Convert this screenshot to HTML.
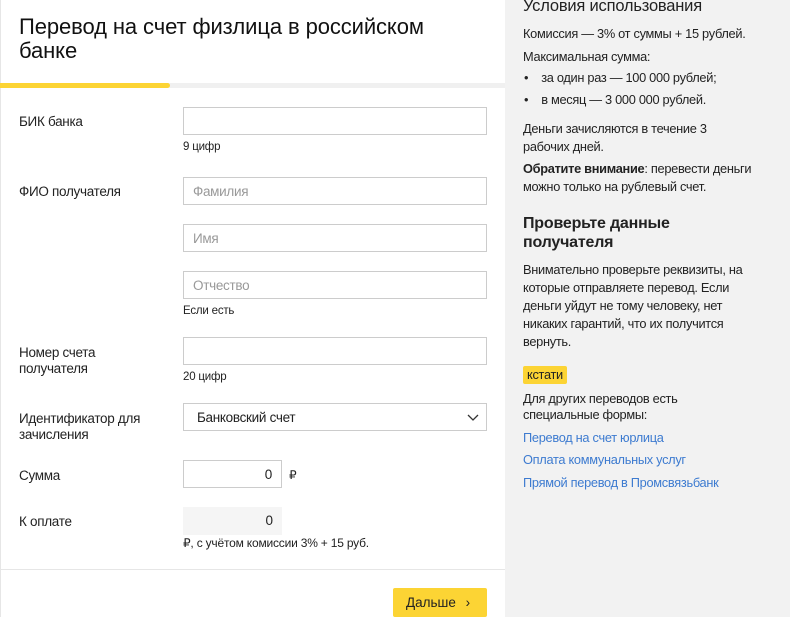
<!DOCTYPE html>
<html><head><meta charset="utf-8"><style>
*{margin:0;padding:0;box-sizing:border-box}
body{width:790px;height:617px;overflow:hidden;background:#f2f2f2;font-family:"Liberation Sans",sans-serif;color:#222;position:relative}
.a{position:absolute;white-space:nowrap}
#left{position:absolute;left:0;top:0;width:505px;height:617px;background:#fff;box-shadow:inset 1px 0 0 #e6e6e6}
.lbl{font-size:13.5px;letter-spacing:-0.3px;line-height:16px}
.inp{position:absolute;border:1px solid #ccc;background:#fff;height:28px;font-size:13.5px;color:#999;padding:6px 9px;letter-spacing:-0.3px}
.hint{font-size:11.5px;letter-spacing:-0.2px}
.r{font-size:12.8px;letter-spacing:-0.3px;line-height:18px}
.lnk{color:#3d7bd0}
</style></head><body>
<div id="left">
<div class="a" style="left:19px;top:15px;font-size:22px;line-height:24px;letter-spacing:-0.1px;color:#111">Перевод на счет физлица в российском<br>банке</div>
<div class="a" style="left:0;top:83px;width:505px;height:5px;background:#f0f0f0"></div>
<div class="a" style="left:0;top:83px;width:170px;height:5px;background:#fcd434;border-radius:0 3px 3px 0"></div>
<div class="a lbl" style="left:19px;top:114px">БИК банка</div>
<div class="inp" style="left:183px;top:107px;width:304px"></div>
<div class="a hint" style="left:183px;top:141px">9 цифр</div>
<div class="a lbl" style="left:19px;top:184px">ФИО получателя</div>
<div class="inp" style="left:183px;top:177px;width:304px">Фамилия</div>
<div class="inp" style="left:183px;top:224px;width:304px">Имя</div>
<div class="inp" style="left:183px;top:271px;width:304px">Отчество</div>
<div class="a hint" style="left:183px;top:305px">Если есть</div>
<div class="a lbl" style="left:19px;top:345px">Номер счета<br>получателя</div>
<div class="inp" style="left:183px;top:337px;width:304px"></div>
<div class="a hint" style="left:183px;top:371px">20 цифр</div>
<div class="a lbl" style="left:19px;top:411px">Идентификатор для<br>зачисления</div>
<div class="inp" style="left:183px;top:403px;width:304px;color:#222;padding-left:13px">Банковский счет</div>
<svg class="a" style="left:467px;top:412px" width="12" height="10"><path d="M1 3l5 5 5-5" stroke="#333" fill="none" stroke-width="1.3"/></svg>
<div class="a lbl" style="left:19px;top:468px">Сумма</div>
<div class="inp" style="left:183px;top:460px;width:99px;color:#222;text-align:right">0</div>
<div class="a" style="left:289px;top:468px;font-size:12px">₽</div>
<div class="a lbl" style="left:19px;top:514px">К оплате</div>
<div class="a" style="left:183px;top:507px;width:99px;height:28px;background:#f5f5f5;font-size:13.5px;text-align:right;padding:6px 9px">0</div>
<div class="a hint" style="left:183px;top:536px;font-size:12px">₽, с учётом комиссии 3% + 15 руб.</div>
<div class="a" style="left:0;top:569px;width:505px;height:1px;background:#e6e6e6"></div>
<div class="a" style="left:393px;top:588px;width:94px;height:29px;background:#fcd434;border-radius:2px;font-size:13.5px;padding:7px 0 0 13px">Дальше <span style="margin-left:6px">›</span></div>
</div>
<div class="a" style="left:523px;top:-3px;font-size:16.5px;letter-spacing:-0.2px">Условия использования</div>
<div class="a r" style="left:523px;top:25px">Комиссия — 3% от суммы + 15 рублей.</div>
<div class="a r" style="left:523px;top:48px">Максимальная сумма:</div>
<div class="a r" style="left:524px;top:69px">•&nbsp;&nbsp;&nbsp;&nbsp;за один раз — 100 000 рублей;</div>
<div class="a r" style="left:524px;top:91px">•&nbsp;&nbsp;&nbsp;&nbsp;в месяц — 3 000 000 рублей.</div>
<div class="a r" style="left:523px;top:120px">Деньги зачисляются в течение 3<br>рабочих дней.</div>
<div class="a r" style="left:523px;top:160px"><b>Обратите внимание</b>: перевести деньги<br>можно только на рублевый счет.</div>
<div class="a" style="left:523px;top:214px;font-size:16px;font-weight:bold;line-height:19px;letter-spacing:-0.2px">Проверьте данные<br>получателя</div>
<div class="a r" style="left:523px;top:261px">Внимательно проверьте реквизиты, на<br>которые отправляете перевод. Если<br>деньги уйдут не тому человеку, нет<br>никаких гарантий, что их получится<br>вернуть.</div>
<div class="a r" style="left:523px;top:366px;background:#fcd434;padding:0 4px;border-radius:2px">кстати</div>
<div class="a r" style="left:523px;top:391px;line-height:16px">Для других переводов есть<br>специальные формы:</div>
<div class="a r lnk" style="left:523px;top:429px">Перевод на счет юрлица</div>
<div class="a r lnk" style="left:523px;top:451px">Оплата коммунальных услуг</div>
<div class="a r lnk" style="left:523px;top:474px">Прямой перевод в Промсвязьбанк</div>
</body></html>
